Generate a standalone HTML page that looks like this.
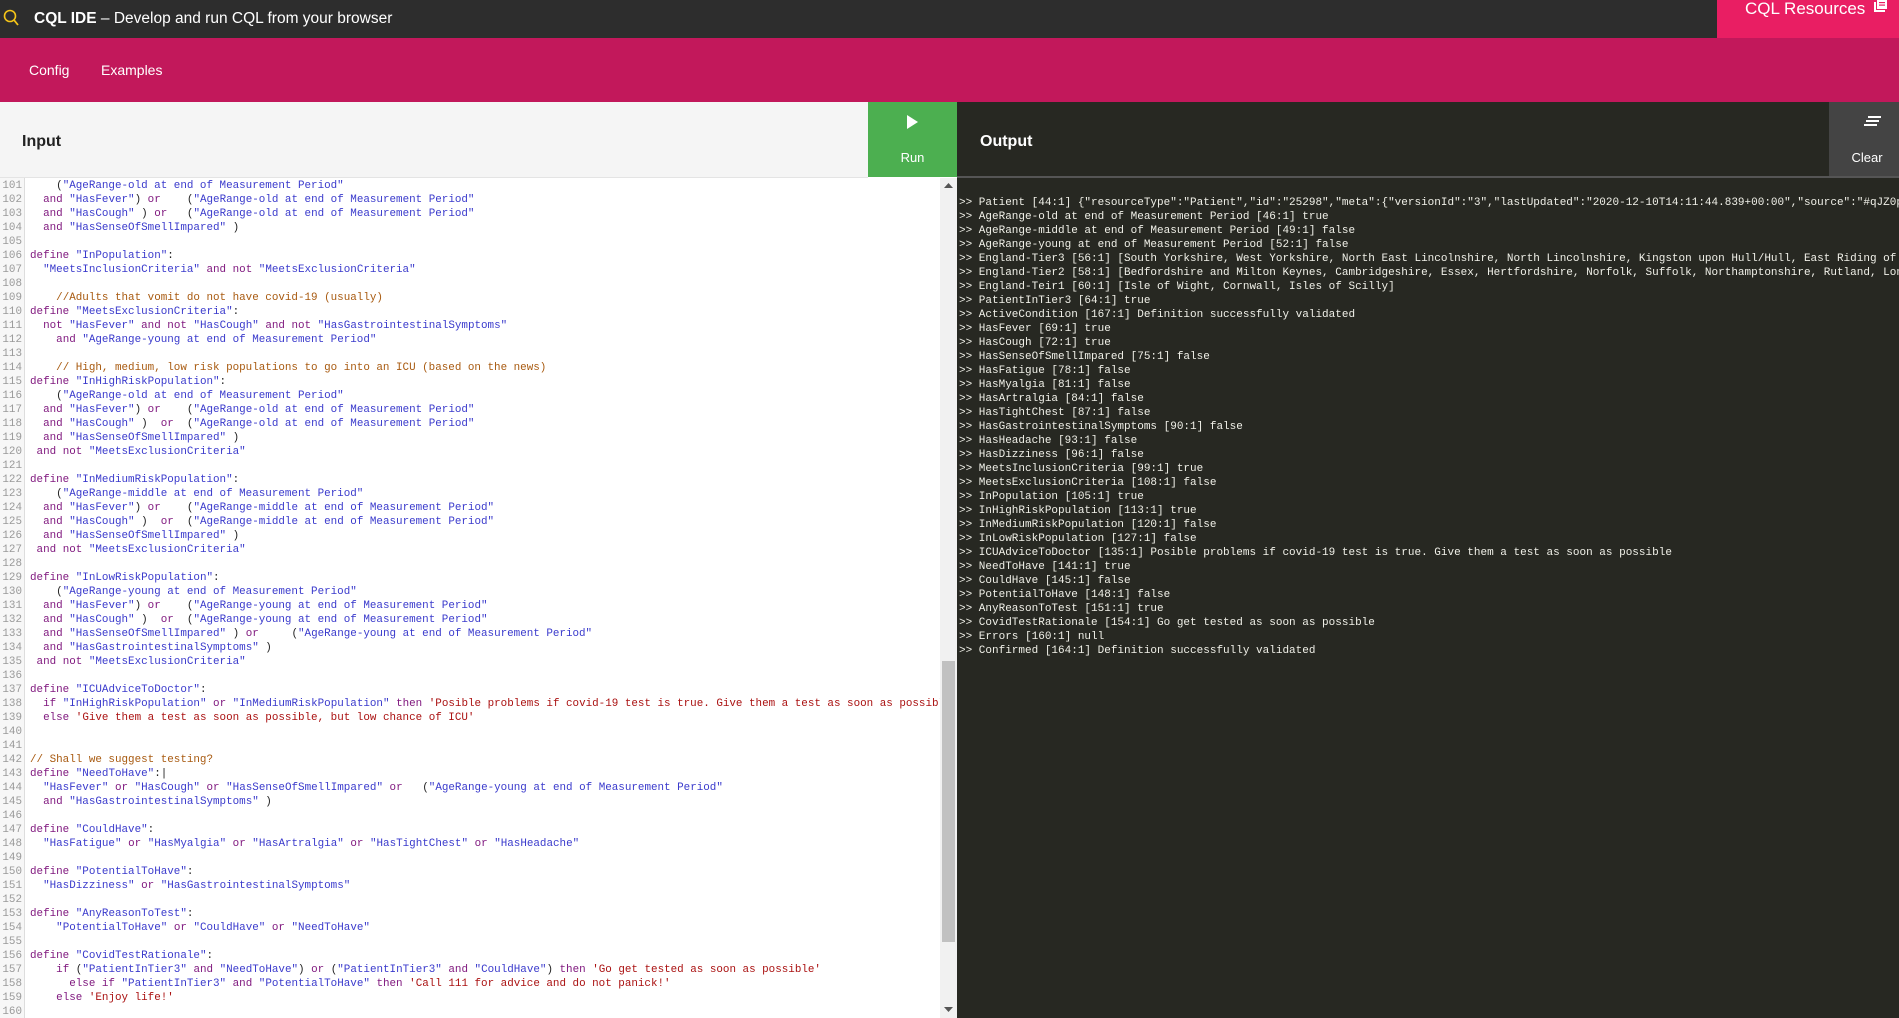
<!DOCTYPE html>
<html><head><meta charset="utf-8"><style>
*{margin:0;padding:0;box-sizing:border-box}
body{width:1899px;height:1018px;overflow:hidden;font-family:"Liberation Sans",sans-serif;background:#fff;position:relative}
.top{position:absolute;left:0;top:0;width:1899px;height:38px;background:#2d2d2d;color:#fff}
.top .t{position:absolute;left:34px;top:10px;font-size:15.5px}
.res{position:absolute;left:1717px;top:0;width:182px;height:38px;background:#e91e63;color:#fff;font-size:17px;padding:0 0 0 28px;line-height:17px}
.pink{position:absolute;left:0;top:38px;width:1899px;height:64px;background:#c2185b;color:#fff;font-size:14px}
.pink span{position:absolute;top:24px}
.inh{position:absolute;left:0;top:102px;width:868px;height:76px;background:#f5f5f5;border-bottom:1px solid #e4e4e4}
.inh b{position:absolute;left:22px;top:31px;font-size:16px;color:#222}
.run{position:absolute;left:868px;top:102px;width:89px;height:75px;background:#4caf50;color:#fff;font-size:13px;text-align:center}
.outh{position:absolute;left:957px;top:102px;width:872px;height:76px;background:#272822;border-bottom:2px solid #555;color:#fff}
.outh b{position:absolute;left:23px;top:31px;font-size:16px}
.clr{position:absolute;left:1829px;top:102px;width:70px;height:76px;background:#444;color:#fff;font-size:13px;border-bottom:2px solid #555}
.ed{position:absolute;left:0;top:178px;width:940px;height:840px;overflow:hidden;background:#fff}
.gut{position:absolute;left:0;top:0;width:25px;height:840px;background:#f7f7f7;border-right:1px solid #ddd}
pre{font-family:"Liberation Mono",monospace;font-size:10.9px;line-height:14px;white-space:pre}
.ln{position:absolute;left:0;top:1px;width:22px;color:#999;text-align:right;font-size:10.9px}
.code{position:absolute;left:30px;top:1px;color:#222}
.k{color:#80197f}.s{color:#3a3acc}.c{color:#a85a10}.r{color:#aa1111}
.sb{position:absolute;left:940px;top:178px;width:17px;height:840px;background:#f1f1f1}
.th{position:absolute;left:2px;top:483px;width:13px;height:281px;background:#c1c1c1}
.out{position:absolute;left:957px;top:178px;width:942px;height:840px;background:#272822;overflow:hidden}
.out pre{position:absolute;left:2px;top:18px;color:#f0f0e8;font-size:11px}
</style></head><body>
<div class="top">
<svg style="position:absolute;left:3px;top:9px" width="16" height="18"><circle cx="7" cy="7" r="5.5" fill="none" stroke="#f5c518" stroke-width="1.6"/><line x1="11" y1="11" x2="15" y2="16" stroke="#f5c518" stroke-width="1.8"/></svg>
<div class="t"><b>CQL IDE</b> – Develop and run CQL from your browser</div>
</div>
<div class="res">CQL Resources <svg style="position:absolute;left:157px;top:0" width="14" height="12"><rect x="3" y="0" width="10" height="9" fill="#fff"/><rect x="0" y="2" width="2" height="10" fill="#fff"/><rect x="0" y="10" width="11" height="2" fill="#fff"/><rect x="5" y="2" width="6" height="1.2" fill="#e91e63"/><rect x="5" y="4.5" width="6" height="1.2" fill="#e91e63"/></svg></div>
<div class="pink"><span style="left:29px">Config</span><span style="left:101px">Examples</span></div>
<div class="inh"><b>Input</b></div>
<div class="run"><svg style="position:absolute;left:39px;top:13px" width="12" height="14"><path d="M0 0L11 7L0 14Z" fill="#fff"/></svg><div style="position:absolute;left:0;width:89px;top:48px">Run</div></div>
<div class="outh"><b>Output</b></div>
<div class="clr"><svg style="position:absolute;left:35px;top:14px" width="18" height="12"><rect x="4" y="0" width="13" height="2" fill="#fff"/><rect x="2" y="4" width="13" height="2" fill="#fff"/><rect x="0" y="8" width="13" height="2" fill="#fff"/></svg><div style="position:absolute;left:0;width:70px;text-align:center;padding-left:6px;top:48px">Clear</div></div>
<div class="ed">
<div class="gut"></div>
<pre class="ln">101
102
103
104
105
106
107
108
109
110
111
112
113
114
115
116
117
118
119
120
121
122
123
124
125
126
127
128
129
130
131
132
133
134
135
136
137
138
139
140
141
142
143
144
145
146
147
148
149
150
151
152
153
154
155
156
157
158
159
160</pre>
<pre class="code">    (<span class="s">"AgeRange-old at end of Measurement Period"</span>
  <span class="k">and</span> <span class="s">"HasFever"</span>) <span class="k">or</span>    (<span class="s">"AgeRange-old at end of Measurement Period"</span>
  <span class="k">and</span> <span class="s">"HasCough"</span> ) <span class="k">or</span>   (<span class="s">"AgeRange-old at end of Measurement Period"</span>
  <span class="k">and</span> <span class="s">"HasSenseOfSmellImpared"</span> )

<span class="k">define</span> <span class="s">"InPopulation"</span>:
  <span class="s">"MeetsInclusionCriteria"</span> <span class="k">and not</span> <span class="s">"MeetsExclusionCriteria"</span>

    <span class="c">//Adults that vomit do not have covid-19 (usually)</span>
<span class="k">define</span> <span class="s">"MeetsExclusionCriteria"</span>:
  <span class="k">not</span> <span class="s">"HasFever"</span> <span class="k">and not</span> <span class="s">"HasCough"</span> <span class="k">and not</span> <span class="s">"HasGastrointestinalSymptoms"</span>
    <span class="k">and</span> <span class="s">"AgeRange-young at end of Measurement Period"</span>

    <span class="c">// High, medium, low risk populations to go into an ICU (based on the news)</span>
<span class="k">define</span> <span class="s">"InHighRiskPopulation"</span>:
    (<span class="s">"AgeRange-old at end of Measurement Period"</span>
  <span class="k">and</span> <span class="s">"HasFever"</span>) <span class="k">or</span>    (<span class="s">"AgeRange-old at end of Measurement Period"</span>
  <span class="k">and</span> <span class="s">"HasCough"</span> )  <span class="k">or</span>  (<span class="s">"AgeRange-old at end of Measurement Period"</span>
  <span class="k">and</span> <span class="s">"HasSenseOfSmellImpared"</span> )
 <span class="k">and not</span> <span class="s">"MeetsExclusionCriteria"</span>

<span class="k">define</span> <span class="s">"InMediumRiskPopulation"</span>:
    (<span class="s">"AgeRange-middle at end of Measurement Period"</span>
  <span class="k">and</span> <span class="s">"HasFever"</span>) <span class="k">or</span>    (<span class="s">"AgeRange-middle at end of Measurement Period"</span>
  <span class="k">and</span> <span class="s">"HasCough"</span> )  <span class="k">or</span>  (<span class="s">"AgeRange-middle at end of Measurement Period"</span>
  <span class="k">and</span> <span class="s">"HasSenseOfSmellImpared"</span> )
 <span class="k">and not</span> <span class="s">"MeetsExclusionCriteria"</span>

<span class="k">define</span> <span class="s">"InLowRiskPopulation"</span>:
    (<span class="s">"AgeRange-young at end of Measurement Period"</span>
  <span class="k">and</span> <span class="s">"HasFever"</span>) <span class="k">or</span>    (<span class="s">"AgeRange-young at end of Measurement Period"</span>
  <span class="k">and</span> <span class="s">"HasCough"</span> )  <span class="k">or</span>  (<span class="s">"AgeRange-young at end of Measurement Period"</span>
  <span class="k">and</span> <span class="s">"HasSenseOfSmellImpared"</span> ) <span class="k">or</span>     (<span class="s">"AgeRange-young at end of Measurement Period"</span>
  <span class="k">and</span> <span class="s">"HasGastrointestinalSymptoms"</span> )
 <span class="k">and not</span> <span class="s">"MeetsExclusionCriteria"</span>

<span class="k">define</span> <span class="s">"ICUAdviceToDoctor"</span>:
  <span class="k">if</span> <span class="s">"InHighRiskPopulation"</span> <span class="k">or</span> <span class="s">"InMediumRiskPopulation"</span> <span class="k">then</span> <span class="r">'Posible problems if covid-19 test is true. Give them a test as soon as possible'</span>
  <span class="k">else</span> <span class="r">'Give them a test as soon as possible, but low chance of ICU'</span>


<span class="c">// Shall we suggest testing?</span>
<span class="k">define</span> <span class="s">"NeedToHave"</span>:|
  <span class="s">"HasFever"</span> <span class="k">or</span> <span class="s">"HasCough"</span> <span class="k">or</span> <span class="s">"HasSenseOfSmellImpared"</span> <span class="k">or</span>   (<span class="s">"AgeRange-young at end of Measurement Period"</span>
  <span class="k">and</span> <span class="s">"HasGastrointestinalSymptoms"</span> )

<span class="k">define</span> <span class="s">"CouldHave"</span>:
  <span class="s">"HasFatigue"</span> <span class="k">or</span> <span class="s">"HasMyalgia"</span> <span class="k">or</span> <span class="s">"HasArtralgia"</span> <span class="k">or</span> <span class="s">"HasTightChest"</span> <span class="k">or</span> <span class="s">"HasHeadache"</span>

<span class="k">define</span> <span class="s">"PotentialToHave"</span>:
  <span class="s">"HasDizziness"</span> <span class="k">or</span> <span class="s">"HasGastrointestinalSymptoms"</span>

<span class="k">define</span> <span class="s">"AnyReasonToTest"</span>:
    <span class="s">"PotentialToHave"</span> <span class="k">or</span> <span class="s">"CouldHave"</span> <span class="k">or</span> <span class="s">"NeedToHave"</span>

<span class="k">define</span> <span class="s">"CovidTestRationale"</span>:
    <span class="k">if</span> (<span class="s">"PatientInTier3"</span> <span class="k">and</span> <span class="s">"NeedToHave"</span>) <span class="k">or</span> (<span class="s">"PatientInTier3"</span> <span class="k">and</span> <span class="s">"CouldHave"</span>) <span class="k">then</span> <span class="r">'Go get tested as soon as possible'</span>
      <span class="k">else if</span> <span class="s">"PatientInTier3"</span> <span class="k">and</span> <span class="s">"PotentialToHave"</span> <span class="k">then</span> <span class="r">'Call 111 for advice and do not panick!'</span>
    <span class="k">else</span> <span class="r">'Enjoy life!'</span>
</pre>
</div>
<div class="sb"><svg style="position:absolute;left:4px;top:5px" width="9" height="6"><path d="M0 5L4.5 0L9 5Z" fill="#555"/></svg><div class="th"></div><svg style="position:absolute;left:4px;top:829px" width="9" height="6"><path d="M0 0L4.5 5L9 0Z" fill="#555"/></svg></div>
<div class="out"><pre>&gt;&gt; Patient [44:1] {"resourceType":"Patient","id":"25298","meta":{"versionId":"3","lastUpdated":"2020-12-10T14:11:44.839+00:00","source":"#qJZ0pXYZ"}}
&gt;&gt; AgeRange-old at end of Measurement Period [46:1] true
&gt;&gt; AgeRange-middle at end of Measurement Period [49:1] false
&gt;&gt; AgeRange-young at end of Measurement Period [52:1] false
&gt;&gt; England-Tier3 [56:1] [South Yorkshire, West Yorkshire, North East Lincolnshire, North Lincolnshire, Kingston upon Hull/Hull, East Riding of Yorkshire]
&gt;&gt; England-Tier2 [58:1] [Bedfordshire and Milton Keynes, Cambridgeshire, Essex, Hertfordshire, Norfolk, Suffolk, Northamptonshire, Rutland, London]
&gt;&gt; England-Teir1 [60:1] [Isle of Wight, Cornwall, Isles of Scilly]
&gt;&gt; PatientInTier3 [64:1] true
&gt;&gt; ActiveCondition [167:1] Definition successfully validated
&gt;&gt; HasFever [69:1] true
&gt;&gt; HasCough [72:1] true
&gt;&gt; HasSenseOfSmellImpared [75:1] false
&gt;&gt; HasFatigue [78:1] false
&gt;&gt; HasMyalgia [81:1] false
&gt;&gt; HasArtralgia [84:1] false
&gt;&gt; HasTightChest [87:1] false
&gt;&gt; HasGastrointestinalSymptoms [90:1] false
&gt;&gt; HasHeadache [93:1] false
&gt;&gt; HasDizziness [96:1] false
&gt;&gt; MeetsInclusionCriteria [99:1] true
&gt;&gt; MeetsExclusionCriteria [108:1] false
&gt;&gt; InPopulation [105:1] true
&gt;&gt; InHighRiskPopulation [113:1] true
&gt;&gt; InMediumRiskPopulation [120:1] false
&gt;&gt; InLowRiskPopulation [127:1] false
&gt;&gt; ICUAdviceToDoctor [135:1] Posible problems if covid-19 test is true. Give them a test as soon as possible
&gt;&gt; NeedToHave [141:1] true
&gt;&gt; CouldHave [145:1] false
&gt;&gt; PotentialToHave [148:1] false
&gt;&gt; AnyReasonToTest [151:1] true
&gt;&gt; CovidTestRationale [154:1] Go get tested as soon as possible
&gt;&gt; Errors [160:1] null
&gt;&gt; Confirmed [164:1] Definition successfully validated</pre></div>
</body></html>
